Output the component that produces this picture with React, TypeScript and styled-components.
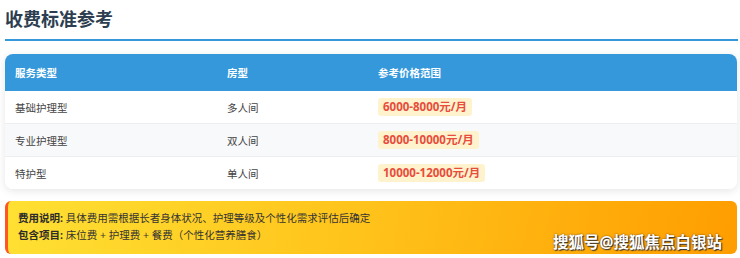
import styled, { createGlobalStyle } from 'styled-components';

const GlobalStyle = createGlobalStyle`
  body {
    margin: 0;
    background: #fff;
    font-family: 'Open Sans', 'Noto Sans CJK SC', sans-serif;
  }
`;

const rows = [
  { type: '基础护理型', room: '多人间', price: '6000-8000元/月' },
  { type: '专业护理型', room: '双人间', price: '8000-10000元/月' },
  { type: '特护型', room: '单人间', price: '10000-12000元/月' },
];

function App() {
  return (
    <Page>
      <GlobalStyle />
      <Title>收费标准参考</Title>
      <Table>
        <HeadRow>
          <HeadCell>服务类型</HeadCell>
          <HeadCell>房型</HeadCell>
          <HeadCell>参考价格范围</HeadCell>
        </HeadRow>
        {rows.map((r, i) => (
          <Row key={r.type} $alt={i % 2 === 1} $last={i === rows.length - 1}>
            <Cell>{r.type}</Cell>
            <Cell>{r.room}</Cell>
            <Cell>
              <Price>{r.price}</Price>
            </Cell>
          </Row>
        ))}
      </Table>
      <Notice>
        <NoticeLine>
          <b>费用说明:</b> 具体费用需根据长者身体状况、护理等级及个性化需求评估后确定
        </NoticeLine>
        <NoticeLine>
          <b>包含项目:</b> 床位费 + 护理费 + 餐费（个性化营养膳食）
        </NoticeLine>
        <Watermark>搜狐号@搜狐焦点白银站</Watermark>
      </Notice>
    </Page>
  );
}

export default App;

const Page = styled.div`
  width: 732px;
  margin-left: 5px;
  padding-top: 6px;
`;

const Title = styled.h2`
  margin: 0;
  padding-bottom: 7px;
  font-size: 18px;
  line-height: 26px;
  font-weight: 700;
  color: #2c3e50;
  border-bottom: 2px solid #3498db;
  margin-right: -1px;
`;

const Table = styled.div`
  margin-top: 13px;
  border-radius: 8px;
  overflow: hidden;
  box-shadow: 0 2px 8px rgba(0, 0, 0, 0.1);
`;

const HeadRow = styled.div`
  display: grid;
  grid-template-columns: 212px 151px 1fr;
  height: 37px;
  align-items: center;
  background: #3498db;
`;

const HeadCell = styled.div`
  padding-left: 10px;
  font-size: 10.5px;
  font-weight: 700;
  color: #fff;
`;

const Row = styled.div<{ $alt: boolean; $last: boolean }>`
  display: grid;
  grid-template-columns: 212px 151px 1fr;
  height: 32px;
  align-items: center;
  background: ${({ $alt }) => ($alt ? '#f8f9fa' : '#fff')};
  border-bottom: ${({ $last }) => ($last ? 'none' : '1px solid #eceef0')};
`;

const Cell = styled.div`
  padding-left: 10px;
  font-size: 10.5px;
  color: #444;
`;

const Price = styled.span`
  display: inline-block;
  padding: 1px 5px;
  border-radius: 3px;
  background: #fff3cd;
  color: #e74c3c;
  font-size: 11.5px;
  font-weight: 700;
  line-height: 16px;
`;

const Notice = styled.div`
  position: relative;
  margin-top: 12px;
  height: 53px;
  box-sizing: border-box;
  padding: 9px 0 0 10px;
  border-left: 3px solid #ff5722;
  border-radius: 6px;
  background: linear-gradient(100deg, #ffe033 0%, #ffc21a 50%, #ff9d00 100%);
`;

const NoticeLine = styled.div`
  font-size: 10.5px;
  line-height: 17px;
  color: #333;
  b {
    font-weight: 700;
    color: #2c2c2c;
  }
`;

const Watermark = styled.div`
  position: absolute;
  right: 15px;
  bottom: 1px;
  font-size: 15.5px;
  font-weight: 700;
  color: #fff;
  text-shadow: 1px 1px 1px #333, 0 0 2px rgba(0, 0, 0, 0.6);
`;
